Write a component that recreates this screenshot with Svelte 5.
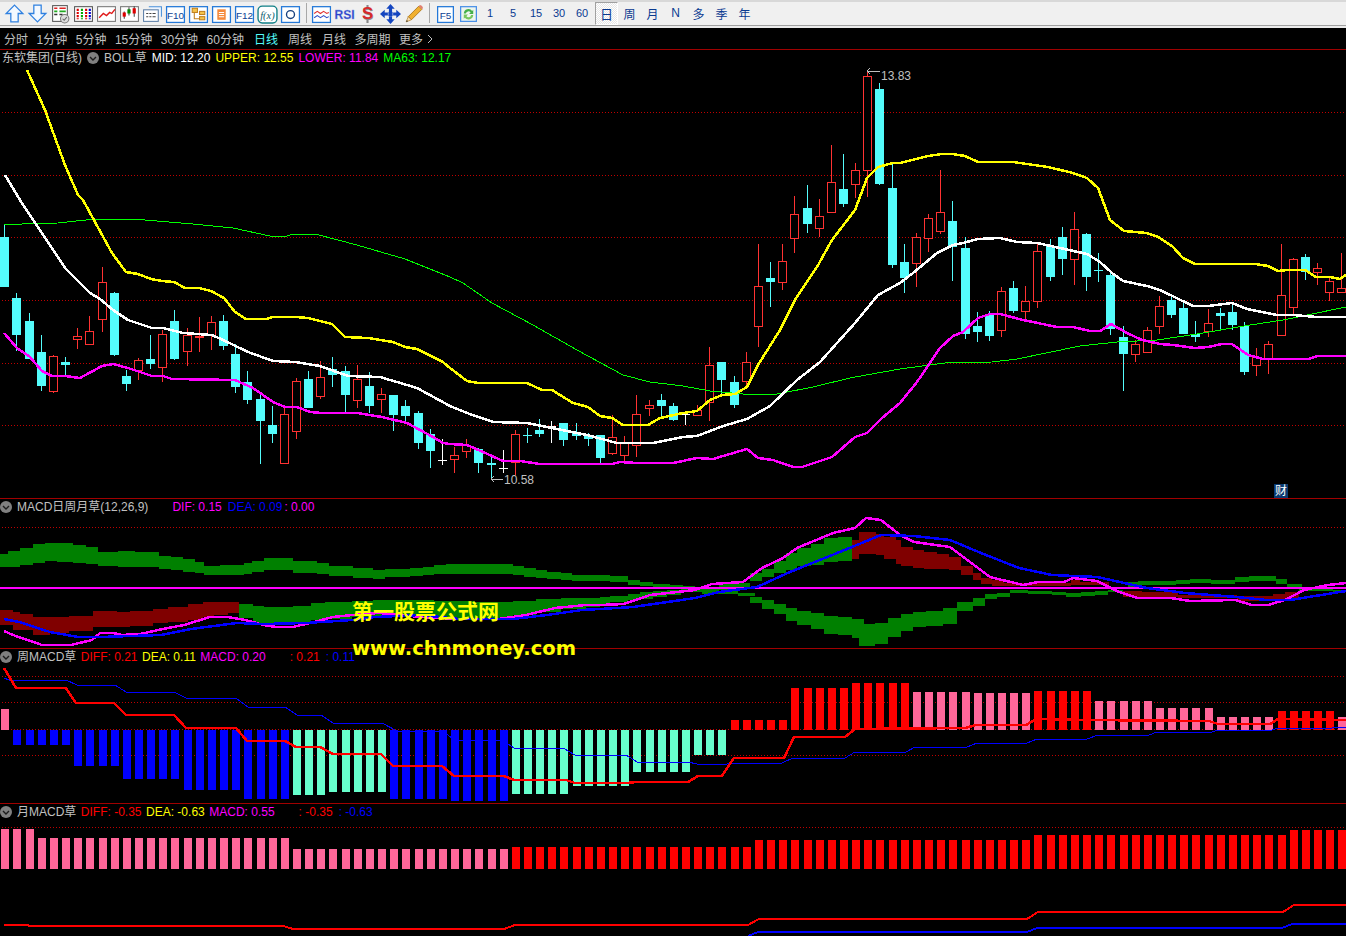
<script>
  const tabs = ['分时', '1分钟', '5分钟', '15分钟', '30分钟', '60分钟', '日线', '周线', '月线', '多周期', '更多'];
  const W = 1346;

  // [kind, high, bodyTop, bodyBottom, low]; one row per trading day
  const candles = [
    ['c',224,237,287,287],['c',293,298,335,351],['c',313,321,359,359],['c',335,352,386,391],['r',355,356,392,393],
    ['c',357,362,365,376],['r',328,336,340,349],['r',316,331,345,345],['r',267,282,320,332],['c',292,293,355,356],
    ['c',370,376,384,391],['r',358,360,371,380],['c',335,359,364,369],['r',330,334,368,382],['c',310,321,359,360],
    ['r',328,335,352,366],['r',317,336,338,352],['r',316,322,336,350],['c',315,321,346,350],['c',344,354,387,393],
    ['c',371,382,400,404],['c',395,399,421,464],['c',406,425,434,443],['r',407,414,464,464],['r',378,381,432,439],
    ['c',371,379,408,408],['r',361,377,397,399],['c',357,369,375,387],['c',366,371,395,412],['r',365,379,401,408],
    ['c',372,386,406,413],['r',388,394,400,413],['c',395,395,415,431],['c',400,406,416,422],['c',411,413,443,449],
    ['c',429,434,451,468],['w',439,460,460,465],['r',447,455,460,473],['r',439,445,452,458],['c',448,449,463,473],
    ['c',455,463,465,480],['w',450,468,468,473],['r',430,434,463,475],['c',428,435,435,443],['c',419,430,434,437],
    ['w',421,426,426,443],['c',423,423,440,446],['c',423,432,436,440],['c',433,436,439,446],['c',435,435,458,463],
    ['r',415,437,454,455],['r',436,443,456,462],['r',395,414,446,457],['r',400,405,409,416],['c',394,400,406,418],
    ['c',403,406,420,421],['w',411,414,414,425],['r',405,410,416,416],['r',347,365,403,421],['c',362,362,380,397],
    ['c',376,382,405,408],['r',352,362,382,387],['r',244,286,327,347],['c',262,278,282,307],['r',244,261,283,290],
    ['r',196,214,239,253],['c',185,208,224,233],['r',199,216,229,237],['r',145,182,213,213],['c',154,189,204,207],
    ['r',163,170,185,198],['r',70,76,171,197],['c',83,89,184,185],['c',164,188,265,268],['c',244,262,278,293],
    ['r',233,237,264,287],['r',214,218,239,252],['r',170,212,232,234],['c',201,221,247,281],['c',237,248,334,339],
    ['c',312,326,332,342],['c',311,315,336,341],['r',287,291,331,337],['c',281,288,311,313],['r',286,301,312,320],
    ['r',244,251,302,308],['c',239,246,277,281],['c',227,237,259,275],['r',212,229,260,285],['c',233,234,277,291],
    ['c',253,270,270,282],['c',273,275,329,335],['c',326,337,354,391],['r',340,344,355,362],['r',327,330,353,353],
    ['r',296,306,327,334],['c',297,300,315,318],['c',303,308,334,334],['c',321,334,337,342],['r',309,323,332,337],
    ['c',308,313,316,330],['c',305,312,325,330],['c',322,326,372,375],['r',348,357,366,376],['r',341,344,359,374],
    ['r',244,295,336,336],['r',258,259,308,315],['c',254,257,272,280],['r',263,268,273,285],['r',278,281,293,301],
    ['r',253,288,293,293]
  ];
  const colors = { c: '#54fcfc', r: '#ff3232', w: '#ffffff' };
  const cx = (i) => Math.round(4.3 + 12.155 * i);
  const pts = (a) => a.map((p) => p.join(',')).join(' ');

  const upper = [[27,70],[45,110],[65,165],[78,195],[83,200],[95,222],[112,253],[126,272],[138,274],[151,279],[162,281],[174,282],[185,288],[199,288],[211,291],[224,298],[235,312],[246,319],[266,319],[273,317],[296,317],[308,318],[332,324],[345,337],[368,338],[393,342],[405,347],[417,349],[433,357],[443,362],[450,368],[467,381],[478,383],[527,383],[542,390],[552,390],[573,403],[588,407],[600,416],[612,418],[623,425],[648,425],[660,418],[683,413],[697,411],[710,400],[722,395],[735,394],[747,387],[758,365],[780,330],[795,300],[817,267],[832,240],[855,210],[867,178],[878,167],[893,163],[900,163],[928,156],[942,154],[952,154],[965,156],[978,162],[1013,162],[1048,167],[1073,173],[1087,178],[1098,188],[1110,220],[1124,231],[1147,233],[1158,237],[1172,246],[1183,258],[1195,264],[1255,264],[1268,266],[1278,271],[1287,270],[1305,270],[1316,277],[1330,277],[1340,279],[1346,275]];
  const mid = [[5,175],[20,200],[35,223],[50,245],[65,268],[90,293],[100,299],[113,310],[128,320],[152,328],[163,328],[183,333],[212,335],[223,340],[248,352],[273,361],[295,362],[320,366],[348,376],[380,377],[417,388],[450,406],[467,413],[493,422],[527,423],[547,427],[587,435],[617,443],[653,443],[683,437],[697,436],[723,426],[747,419],[770,406],[797,380],[820,362],[855,323],[878,295],[900,283],[913,273],[937,253],[953,245],[963,243],[978,239],[1000,238],[1017,242],[1037,243],[1060,248],[1087,254],[1100,262],[1112,273],[1123,281],[1147,286],[1160,290],[1193,306],[1208,306],[1232,303],[1247,309],[1277,315],[1293,315],[1317,317],[1346,317]];
  const lower = [[4,333],[17,348],[30,357],[42,371],[52,376],[65,376],[80,378],[102,366],[113,364],[128,368],[152,376],[163,376],[172,379],[235,380],[253,388],[273,402],[285,407],[297,407],[310,412],[322,413],[357,413],[382,417],[407,423],[433,437],[443,443],[450,444],[467,445],[483,452],[503,461],[520,461],[540,464],[612,464],[620,462],[637,463],[673,463],[697,458],[713,459],[747,449],[758,458],[773,460],[793,467],[802,467],[832,457],[855,437],[867,433],[882,418],[900,403],[917,382],[940,348],[953,336],[963,332],[978,318],[990,314],[1000,314],[1023,320],[1057,327],[1073,327],[1090,331],[1100,331],[1111,324],[1127,333],[1142,340],[1160,344],[1173,345],[1195,348],[1208,347],[1222,344],[1232,344],[1248,355],[1263,359],[1308,359],[1318,356],[1346,356]];
  const ma63 = [[4,225],[22,224],[58,223],[95,219],[132,219],[157,221],[193,224],[233,228],[270,236],[287,236],[293,234],[315,234],[357,245],[405,259],[450,277],[463,283],[492,303],[533,325],[577,350],[623,375],[650,382],[683,386],[710,391],[743,394],[777,394],[813,387],[850,378],[883,372],[900,369],[945,363],[992,362],[1017,359],[1080,346],[1117,342],[1157,340],[1197,334],[1250,325],[1283,320],[1346,307]];
  const mainGrid = [112, 175, 237, 300, 363, 425];

  // MACD bands as measured: [x0, x1, top, bottom], [sx, ox] maps x and y = 495 + v / 3
  const bandRect = (r, sx, ox) => ({
    x: Math.round(ox + r[0] / sx),
    w: Math.max(1, Math.round(ox + r[1] / sx) - Math.round(ox + r[0] / sx)),
    y: Math.round(495 + r[2] / 3),
    h: Math.round((r[3] - r[2]) / 3)
  });
  const L = 2.613, R = 2.102;
  const green = [
    ...[[0,22,178,218],[22,52,168,215],[52,86,158,210],[86,118,147,205],[118,150,144,198],[150,192,144,200],[192,225,150,205],[225,255,156,208],[255,308,172,215],[308,352,168,215],[352,415,172,218],[415,448,183,222],[448,478,187,225],[478,510,193,232],[510,532,202,235],[532,575,212,240],[575,637,210,240],[637,658,203,235],[658,690,197,230],[690,765,189,225],[765,828,197,232],[828,860,205,238],[860,922,212,243],[922,975,218,248],[975,1005,224,250],[1005,1072,222,245],[1072,1105,220,244],[1105,1135,215,240],[1135,1165,210,238],[1165,1340,207,238],[1340,1370,212,240],[1370,1400,218,246],[1400,1430,225,250],[1430,1465,232,254],[1465,1495,235,257],[1495,1568,240,258],
      [625,660,327,370],[660,690,332,382],[690,765,335,385],[765,812,332,380],[812,850,325,375],[850,880,322,372],[880,920,320,370],[920,975,318,365],[975,1135,315,365],[1135,1240,318,370],[1240,1300,320,375],[1300,1340,320,370],[1340,1400,317,360],[1400,1465,312,350],[1465,1530,308,340],[1530,1568,308,335]].map((r) => bandRect(r, L, 0)),
    ...[[0,22,240,258],[22,58,243,262],[58,85,255,270],[85,112,262,274],[112,148,267,276],[148,175,270,278],[175,200,273,278],
      [0,22,305,325],[22,58,303,322],[58,85,297,315],[85,112,290,310],[112,140,287,305],[140,170,285,300],[170,215,282,290],[215,250,280,292],[250,290,268,285],[290,315,265,278],[315,340,235,258],[340,365,222,247],[365,392,198,235],[392,415,175,225],[415,443,160,215],[443,470,148,210],[470,500,130,203],[500,530,125,197],
      [215,290,288,296],[290,325,293,303],[315,340,306,323],[340,365,315,342],[365,392,327,357],[392,415,340,378],[415,443,348,390],[443,470,353,402],[470,500,362,415],[500,530,366,420],[530,555,372,430],[544,578,386,453],[578,605,383,447],[605,632,370,426],[632,658,357,408],[658,685,352,396],[685,722,347,392],[722,750,340,388],[750,785,322,350],[785,810,309,332],[810,835,298,312],[835,862,293,305],[862,900,286,296],[900,950,288,298],[950,980,290,300],[980,1012,293,306],[1012,1040,291,303],[1040,1068,289,302],[1068,1100,285,292],
      [1110,1130,262,278],[1130,1210,259,270],[1210,1240,255,268],[1240,1285,252,265],[1285,1335,255,268],[1335,1365,246,262],[1365,1420,243,258],[1420,1445,252,268],[1445,1475,267,278],[1470,1500,278,288],[1500,1540,283,290],[1540,1568,285,292]].map((r) => bandRect(r, R, 600))
  ];
  const maroon = [
    ...[[0,35,345,390],[35,52,350,405],[52,85,358,405],[85,130,365,418],[130,180,367,415],[180,242,362,408],[242,305,348,395],[305,340,350,395],[340,400,347,392],[400,440,342,385],[440,490,335,380],[490,530,328,375],[530,560,322,368],[560,595,320,360],[595,625,322,355]].map((r) => bandRect(r, L, 0)),
    ...[[530,545,135,192],[545,580,112,178],[580,597,118,180],[597,622,125,192],[622,632,135,208],[632,658,155,212],[658,682,165,218],[682,708,170,220],[708,733,177,222],[733,758,185,225],[758,785,212,240],[785,800,233,255],[800,825,250,268],[825,850,255,272],[850,990,265,275],[990,1010,255,270],[1010,1070,260,270],[1100,1140,287,305],[1140,1215,292,306],[1215,1340,300,310],[1340,1415,303,318],[1415,1440,296,315],[1440,1470,290,308]].map((r) => bandRect(r, R, 600))
  ];
  const toPts = (a, sx, ox) => a.map((p) => [Math.round(ox + p[0] / sx), Math.round(495 + p[1] / 3)]);
  const dif = [
    ...toPts([[10,408],[35,420],[110,450],[185,450],[240,435],[262,413],[295,413],[320,419],[365,416],[425,402],[480,390],[550,367],[595,367],[640,375],[690,390],[720,395],[765,395],[820,380],[870,365],[920,360],[990,355],[1100,365],[1200,373],[1300,373],[1375,360],[1450,340],[1530,330]], L, 0),
    ...toPts([[0,330],[50,327],[105,300],[200,285],[235,268],[300,260],[340,220],[385,190],[415,158],[490,115],[535,100],[560,70],[590,75],[630,120],[660,140],[735,157],[820,247],[890,270],[920,262],[975,262],[995,250],[1045,258],[1090,290],[1130,308],[1200,310],[1240,317],[1335,315],[1370,330],[1405,330],[1440,315],[1480,285],[1530,270],[1568,265]], R, 600)
  ];
  const dea = [
    ...toPts([[10,372],[50,382],[130,410],[205,425],[260,425],[420,420],[500,403],[620,383],[690,386],[800,385],[920,375],[980,365],[1100,360],[1200,372],[1340,372],[1430,360],[1520,345]], L, 0),
    ...toPts([[0,342],[70,337],[200,308],[250,292],[330,275],[400,230],[530,155],[590,120],[660,122],[735,135],[800,175],[880,220],[950,240],[1045,245],[1150,280],[1230,295],[1340,305],[1400,315],[1450,315],[1568,288]], R, 600)
  ];

  // Histogram runs: [first, last, color, y]
  const BL = '#0000ff', AQ = '#66ffcc', PK = '#ff6699', RD = '#ff0000';
  const weekRuns = [
    [0,0,PK,709],[1,5,BL,745],[6,9,BL,766],[10,14,BL,779],[15,19,BL,790],[20,23,BL,799],[24,26,AQ,795],[27,31,AQ,792],
    [32,36,BL,799],[37,41,BL,801],[42,46,AQ,794],[47,51,AQ,786],[52,56,AQ,772],[57,59,AQ,755],
    [60,64,RD,720],[65,69,RD,688],[70,74,RD,683],[75,79,PK,692],[80,84,PK,693],[85,89,RD,691],[90,94,PK,701],[95,99,PK,708],
    [100,104,PK,717],[105,109,RD,711],[110,110,PK,717]
  ];
  const monthRuns = [[0,2,PK,829],[3,23,PK,838],[24,41,PK,849],[42,61,RD,847],[62,84,RD,840],[85,105,RD,835],[106,110,RD,830]];
  const expand = (runs, base) => runs.flatMap(([a, b, color, y]) => {
    const out = [];
    for (let i = a; i <= b; i++) out.push({ x: cx(i) - 3, color, y: Math.min(y, base), h: Math.abs(y - base) });
    return out;
  });
  const weekBars = expand(weekRuns, 730);
  const monthBars = expand(monthRuns, 869);
  const weekRed = [[4,668],[16,688],[66,688],[76,703],[114,703],[126,715],[174,715],[186,728],[236,728],[247,741],[285,741],[296,747],[320,747],[333,754],[381,754],[393,766],[442,766],[454,776],[504,776],[514,780],[566,780],[575,783],[627,783],[636,782],[688,782],[698,776],[722,776],[734,758],[784,758],[794,737],[845,737],[855,729],[965,728],[976,725],[1026,725],[1036,719],[1085,720],[1209,721],[1218,724],[1270,724],[1278,719],[1346,720]];
  const weekBlue = [[4,678],[9,680],[66,680],[77,685],[115,685],[126,692],[174,692],[186,698],[236,698],[248,707],[285,707],[297,715],[321,715],[333,723],[382,723],[397,731],[442,731],[455,740],[502,740],[514,748],[563,748],[575,755],[626,755],[637,762],[688,762],[697,764],[727,764],[731,763],[782,763],[793,758],[845,758],[855,752],[906,752],[915,747],[967,747],[977,743],[1027,743],[1037,739],[1087,739],[1098,735],[1149,735],[1157,732],[1212,732],[1218,730],[1272,730],[1278,728],[1332,728],[1337,727],[1346,727]];
  const monthRed = [[4,925],[28,925],[29,926],[283,926],[293,929],[504,929],[515,925],[748,925],[759,919],[1027,919],[1038,912],[1283,912],[1294,905],[1346,905]];
  const monthBlue = [[748,936],[758,932],[1027,932],[1037,928],[1282,928],[1292,924],[1346,924]];
</script>

<div class="app">
  <div class="toolbar">
    <span class="btn"><svg viewBox="0 0 20 20"><path d="M10 2 18 10H13.5V18H6.5V10H2Z" fill="#f4f9ff" stroke="#2f80e0" stroke-width="1.2"/></svg></span>
    <span class="btn"><svg viewBox="0 0 20 20"><path d="M10 18 18 10H13.5V2H6.5V10H2Z" fill="#f4f9ff" stroke="#2f80e0" stroke-width="1.2"/></svg></span>
    <span class="btn"><svg viewBox="0 0 20 20"><rect x="2.5" y="2.5" width="14" height="15" fill="#fff" stroke="#555"/><path d="M4 5h3M9 5h6" stroke="#d22" stroke-width="1.5"/><path d="M4 8h3M9 8h6" stroke="#2a2" stroke-width="1.5"/><path d="M4 11h3M9 11h3" stroke="#333" stroke-width="1.5"/><circle cx="14" cy="15" r="4" fill="#ddd" stroke="#777"/><path d="M12 15l1.5 1.5 2.5-3" fill="none" stroke="#666"/></svg></span>
    <span class="btn"><svg viewBox="0 0 20 20"><rect x="1.5" y="3.5" width="17" height="14" fill="#fff" stroke="#555"/><path d="M4.5 5.5v10" stroke="#d00" stroke-width="2" stroke-dasharray="2 1"/><path d="M8.5 5.5v10" stroke="#0a0" stroke-width="2" stroke-dasharray="2 1"/><path d="M12.5 5.5v10" stroke="#d00" stroke-width="2" stroke-dasharray="2 1"/><path d="M16 5.5v10" stroke="#00c" stroke-width="2" stroke-dasharray="2 1"/></svg></span>
    <span class="btn"><svg viewBox="0 0 20 20"><rect x="1.5" y="3.5" width="17" height="14" fill="#fff" stroke="#777"/><path d="M3 14l4-4 3 2 3-3 2 1 3-4" fill="none" stroke="#e01818" stroke-width="1.3"/></svg></span>
    <span class="btn"><svg viewBox="0 0 20 20"><rect x="1.5" y="3.5" width="17" height="14" fill="#fff" stroke="#777"/><path d="M5 8v7M9.5 4v8M14.5 3v10" stroke="#444"/><rect x="3.5" y="9" width="3" height="4" fill="#d00"/><rect x="8" y="6" width="3" height="4" fill="#080"/><rect x="13" y="5" width="3" height="5" fill="#d00"/></svg></span>
    <span class="btn"><svg viewBox="0 0 20 20"><path d="M6.5 3.5H18.5V13" fill="#eef5ff" stroke="#4a90d9"/><rect x="1.5" y="6.5" width="14" height="11" fill="#fff" stroke="#5c7fa8"/><path d="M4 10h2M7 10h2M10 10h3M4 13h2M7 13h2M10 13h3" stroke="#444"/></svg></span>
    <span class="btn"><svg viewBox="0 0 20 20"><rect x="1.5" y="3.5" width="17" height="15" fill="#fff" stroke="#2378d8" stroke-width="1.2"/><text x="10" y="15" class="ic">F10</text></svg></span>
    <span class="btn"><svg viewBox="0 0 20 20"><rect x="1.5" y="3.5" width="17" height="15" fill="#fff" stroke="#2378d8" stroke-width="1.2"/><path d="M6 8v7h5" fill="none" stroke="#c08020"/><rect x="4" y="5" width="5" height="4" fill="#f6c34a" stroke="#c08020"/><rect x="11" y="8" width="5" height="3" fill="#f6c34a" stroke="#c08020"/><rect x="11" y="13" width="5" height="3" fill="#f6c34a" stroke="#c08020"/></svg></span>
    <span class="btn"><svg viewBox="0 0 20 20"><rect x="1.5" y="3.5" width="17" height="15" fill="#fff" stroke="#2378d8" stroke-width="1.2"/><rect x="6" y="6" width="8" height="10" fill="#f58a3c"/><path d="M7.5 9h5M7.5 11h5M7.5 13h5" stroke="#fff"/></svg></span>
    <span class="btn"><svg viewBox="0 0 20 20"><rect x="1.5" y="3.5" width="17" height="15" fill="#fff" stroke="#2378d8" stroke-width="1.2"/><text x="10" y="15" class="ic">F12</text></svg></span>
    <span class="btn"><svg viewBox="0 0 20 20"><rect x="1" y="3" width="18" height="16" rx="4" fill="#fff" stroke="#0f7f86" stroke-width="1.3"/><text x="10" y="15" class="ic it">f(x)</text></svg></span>
    <span class="btn"><svg viewBox="0 0 20 20"><rect x="1.5" y="3.5" width="17" height="15" fill="#fff" stroke="#2378d8" stroke-width="1.2"/><circle cx="10" cy="11" r="3.8" fill="none" stroke="#17407e" stroke-width="1.3"/></svg></span>
    <span class="sep"></span>
    <span class="btn"><svg viewBox="0 0 20 20"><rect x="1.5" y="3.5" width="17" height="15" fill="#fff" stroke="#2378d8" stroke-width="1.2"/><path d="M3 10l3-2 3 2 3-2 3 2 2-1" fill="none" stroke="#e03030"/><path d="M3 14l3-2 3 2 3-2 3 2 2-1" fill="none" stroke="#3050c8"/></svg></span>
    <span class="btn"><svg viewBox="0 0 20 20"><text x="10" y="15" class="rsi">RSI</text></svg></span>
    <span class="btn"><svg viewBox="0 0 20 20"><path d="M10 2v3M10 16v3" stroke="#888" stroke-width="2"/><text x="10.5" y="16" class="dollar shade">S</text><text x="10" y="15.5" class="dollar">S</text></svg></span>
    <span class="btn"><svg viewBox="0 0 20 20"><path d="M10 1 14 5.5H11.5V8.500H8.500V5.500H6ZM10 20 14 15.500H11.500V12.500H8.500V15.500H6ZM0 10.500 4.500 6.500V9H7.500V12H4.500V14.500ZM20 10.500 15.500 6.500V9H12.500V12H15.500V14.500Z" fill="#1546c0"/><rect x="8" y="8.500" width="4" height="4" fill="#1546c0"/></svg></span>
    <span class="btn"><svg viewBox="0 0 20 20"><path d="M5 13 15 3l3 3L8 16Z" fill="#f0b030" stroke="#a87010" stroke-width=".8"/><path d="M15 3l3 3 1-1c0-1.500-1.500-3-3-3Z" fill="#e08070"/><path d="M5 13 3 18l5-2Z" fill="#f6dcb0" stroke="#a87010" stroke-width=".6"/><path d="M3 18l1.800-.700-1.100-1.100Z" fill="#333"/></svg></span>
    <span class="sep"></span>
    <span class="btn"><svg viewBox="0 0 20 20"><rect x="2.5" y="3.500" width="15" height="15" fill="#fff" stroke="#2378d8" stroke-width="1.200"/><text x="10" y="15" class="ic">F5</text></svg></span>
    <span class="btn"><svg viewBox="0 0 20 20"><rect x="2.500" y="3.500" width="15" height="14" fill="#eef5ee" stroke="#4a90e8" stroke-width="1.200"/><path d="M5.500 10a4.500 4.500 0 0 1 8-2.500l1-1v4h-4l1.500-1.500a2.500 2.500 0 0 0-4.500 1Z" fill="#46b04a"/><path d="M14.500 11.500a4.500 4.500 0 0 1-8 2.500l-1 1v-4h4l-1.500 1.500a2.500 2.500 0 0 0 4.500-1Z" fill="#78c860"/></svg></span>
    {#each ['1', '5', '15', '30', '60'] as n}
      <span class="btn num" class:lead={n === '1'}>{n}</span>
    {/each}
    <span class="btn per active">日</span>
    {#each ['周', '月', 'N', '多', '季', '年'] as n}
      <span class="btn per">{n}</span>
    {/each}
  </div>

  <nav class="tabs">
    {#each tabs as t}
      <span class="tab" class:cur={t === '日线'}>{t}</span>
    {/each}
    <svg class="more" viewBox="0 0 6 10" width="6" height="10"><path d="M1 1l4 4-4 4" fill="none" stroke="#c0c0c0"/></svg>
  </nav>

  <section class="panel main">
    <svg class="chart" viewBox="0 50 1346 448" width={W} height="448">
      {#each mainGrid as y}
        <line class="grid" x1="2" x2={W} y1={y + 0.5} y2={y + 0.5} />
      {/each}
      {#each candles as [k, hi, top, bot, lo], i}
        <rect class="px" x={cx(i)} y={hi} width="1" height={lo - hi} fill={colors[k]} />
        {#if k === 'r'}
          <rect class="px" x={cx(i) - 4 + 0.5} y={top + 0.5} width="8" height={Math.max(bot - top - 1, 1)} fill="#000" stroke={colors[k]} />
        {:else}
          <rect class="px" x={cx(i) - 4} y={top} width="9" height={Math.max(bot - top, 1)} fill={colors[k]} />
        {/if}
      {/each}
      <polyline class="ln" points={pts(ma63)} stroke="#00ff00" stroke-width="1" />
      <polyline class="ln" points={pts(upper)} stroke="#ffff00" stroke-width="2.5" />
      <polyline class="ln" points={pts(mid)} stroke="#ffffff" stroke-width="2.5" />
      <polyline class="ln" points={pts(lower)} stroke="#ff00ff" stroke-width="2.5" />
      <path class="note-line" d="M867 71h13M867 71l3-3M867 71l3 3" />
      <text class="note" x="881" y="80">13.83</text>
      <path class="note-line" d="M491 479h12M491 479l3-3M491 479l3 3" />
      <text class="note" x="504" y="484">10.58</text>
    </svg>
    <div class="legend">
      <span class="gray">东软集团(日线)</span>
      <svg class="chev" viewBox="0 0 12 12" width="12" height="12"><circle cx="6" cy="6" r="6" fill="#808080"/><path d="M3 5l3 3 3-3" fill="none" stroke="#1c1c1c" stroke-width="1.400"/></svg>
      <span class="gray">BOLL草</span>
      <span class="white">MID: 12.20</span>
      <span class="yellow">UPPER: 12.55</span>
      <span class="magenta">LOWER: 11.84</span>
      <span class="lime">MA63: 12.17</span>
    </div>
    <span class="cai">财</span>
  </section>

  <section class="panel macd">
    <svg class="chart" viewBox="0 499 1346 149" width={W} height="149">
      <line class="grid" x1="2" x2={W} y1="527.5" y2="527.5" />
      {#each green as b}
        <rect class="px" x={b.x} y={b.y} width={b.w} height={b.h} fill="#008000" />
      {/each}
      {#each maroon as b}
        <rect class="px" x={b.x} y={b.y} width={b.w} height={b.h} fill="#800000" />
      {/each}
      <line x1="0" x2={W} y1="588" y2="588" stroke="#ff00ff" stroke-width="2" class="px" />
      <polyline class="ln" points={pts(dif)} stroke="#ff00ff" stroke-width="2.5" />
      <polyline class="ln" points={pts(dea)} stroke="#0000ff" stroke-width="2.5" />
    </svg>
    <div class="legend flush">
      <svg class="chev" viewBox="0 0 12 12" width="12" height="12"><circle cx="6" cy="6" r="6" fill="#808080"/><path d="M3 5l3 3 3-3" fill="none" stroke="#1c1c1c" stroke-width="1.400"/></svg>
      <span class="gray">MACD日周月草(12,26,9)</span>
      <span class="magenta far">DIF: 0.15</span>
      <span class="blue near">DEA: 0.09</span>
      <span class="magenta tight">: 0.00</span>
    </div>
  </section>

  <section class="panel week">
    <svg class="chart" viewBox="0 649 1346 154" width={W} height="154">
      {#each [676, 702, 729, 755] as y}
        <line class="grid" x1="2" x2={W} y1={y + 0.5} y2={y + 0.5} />
      {/each}
      {#each weekBars as b}
        <rect class="px" x={b.x} y={b.y} width="8" height={b.h} fill={b.color} />
      {/each}
      <polyline class="ln" points={pts(weekBlue)} stroke="#0000ff" stroke-width="1" />
      <polyline class="ln" points={pts(weekRed)} stroke="#ff0000" stroke-width="2.5" />
    </svg>
    <div class="legend flush">
      <svg class="chev" viewBox="0 0 12 12" width="12" height="12"><circle cx="6" cy="6" r="6" fill="#808080"/><path d="M3 5l3 3 3-3" fill="none" stroke="#1c1c1c" stroke-width="1.400"/></svg>
      <span class="gray">周MACD草</span>
      <span class="red">DIFF: 0.21</span>
      <span class="yellow">DEA: 0.11</span>
      <span class="magenta">MACD: 0.20</span>
      <span class="red far">: 0.21</span>
      <span class="blue near">: 0.11</span>
    </div>
  </section>

  <section class="panel month">
    <svg class="chart" viewBox="0 804 1346 132" width={W} height="132">
      <line class="grid" x1="2" x2={W} y1="827.5" y2="827.5" />
      {#each monthBars as b}
        <rect class="px" x={b.x} y={b.y} width="8" height={b.h} fill={b.color} />
      {/each}
      <polyline class="ln" points={pts(monthBlue)} stroke="#0000ff" stroke-width="2" />
      <polyline class="ln" points={pts(monthRed)} stroke="#ff0000" stroke-width="2" />
    </svg>
    <div class="legend flush">
      <svg class="chev" viewBox="0 0 12 12" width="12" height="12"><circle cx="6" cy="6" r="6" fill="#808080"/><path d="M3 5l3 3 3-3" fill="none" stroke="#1c1c1c" stroke-width="1.400"/></svg>
      <span class="gray">月MACD草</span>
      <span class="red">DIFF: -0.35</span>
      <span class="yellow">DEA: -0.63</span>
      <span class="magenta">MACD: 0.55</span>
      <span class="red far">: -0.35</span>
      <span class="blue near">: -0.63</span>
    </div>
  </section>

  <div class="watermark">
    <div class="wm-cn">第一股票公式网</div>
    <div class="wm-en">www.chnmoney.com</div>
  </div>
</div>

<style>
  :global(body) {
    margin: 0;
    background: #000;
    overflow: hidden;
  }
  .app {
    position: relative;
    width: 1346px;
    height: 936px;
    overflow: hidden;
    background: #000;
    font: 12px "Liberation Sans", "Noto Sans CJK SC", sans-serif;
  }
  .toolbar {
    box-sizing: border-box;
    height: 28px;
    display: flex;
    align-items: center;
    padding: 0 0 4px 2.5px;
    background: #f0f0f0;
    border-top: 2px solid #d8d8d8;
    box-shadow: inset 0 -2px 0 0 #ececec, inset 0 -3px 0 0 #a0a0a0;
  }
  .btn {
    flex: none;
    box-sizing: border-box;
    width: 23px;
    height: 23px;
    display: flex;
    align-items: center;
    justify-content: center;
  }
  .btn svg {
    width: 21px;
    height: 21px;
  }
  .sep {
    flex: none;
    width: 1px;
    height: 20px;
    margin: 0 3.5px 0 4px;
    background: #a8a8a8;
  }
  .num {
    color: #0a3a90;
    font-size: 11px;
  }
  .lead {
    margin-left: -1px;
  }
  .per {
    color: #0a3a90;
    font-size: 12px;
  }
  .active {
    margin-left: 1.5px;
    font-size: 13px;
    border: 1px solid;
    border-color: #a0a0a0 #fff #fff #a0a0a0;
    background: repeating-conic-gradient(#fff 0 25%, #e6e6e6 0 50%) 0 0 / 2px 2px;
  }
  .ic {
    font: 9.5px "Liberation Sans", sans-serif;
    fill: #0c3f94;
    text-anchor: middle;
  }
  .it {
    font: italic 10px "Liberation Serif", serif;
    fill: #0f5f70;
  }
  .rsi {
    font: bold 11.5px "Liberation Sans", sans-serif;
    fill: #2a40c8;
    stroke: #8aa0e8;
    stroke-width: 0.3;
    text-anchor: middle;
  }
  .dollar {
    font: bold 16px "Liberation Sans", sans-serif;
    fill: #d82a2a;
    text-anchor: middle;
  }
  .shade {
    fill: #8a8a8a;
  }
  .tabs {
    box-sizing: border-box;
    height: 21px;
    display: flex;
    align-items: center;
    gap: 8.5px;
    padding-left: 4px;
    color: #c0c0c0;
  }
  .tab:nth-child(7),
  .tab:nth-child(8),
  .tab:nth-child(9) {
    margin-left: 1.5px;
  }
  .cur {
    color: #54fcfc;
  }
  .more {
    margin-left: -5px;
  }
  .panel {
    position: relative;
    border-top: 1px solid #a00000;
  }
  .chart {
    display: block;
  }
  .grid {
    stroke: #c00000;
    stroke-dasharray: 1 2;
  }
  .px {
    shape-rendering: crispEdges;
  }
  .ln {
    fill: none;
    shape-rendering: crispEdges;
  }
  .note {
    font: 12px "Liberation Sans", sans-serif;
    fill: #c0c0c0;
  }
  .note-line {
    fill: none;
    stroke: #c0c0c0;
    shape-rendering: crispEdges;
  }
  .legend {
    position: absolute;
    left: 2px;
    top: 0;
    height: 16px;
    line-height: 16px;
    display: flex;
    align-items: baseline;
    gap: 5px;
    white-space: nowrap;
  }
  .legend.flush {
    left: 0;
    gap: 4.5px;
  }
  .legend .chev {
    flex: none;
    align-self: center;
  }
  .legend.flush .chev {
    margin-right: 0.5px;
  }
  .gray {
    color: #c0c0c0;
  }
  .white {
    color: #fff;
  }
  .yellow {
    color: #ff0;
  }
  .magenta {
    color: #f0f;
  }
  .lime {
    color: #0f0;
  }
  .red {
    color: #f00;
  }
  .blue {
    color: #00f;
  }
  .far {
    margin-left: 19.5px;
  }
  .near {
    margin-left: 1.5px;
  }
  .tight {
    margin-left: -2.5px;
  }
  .cai {
    position: absolute;
    left: 1274px;
    bottom: 0;
    width: 14px;
    height: 14px;
    line-height: 14px;
    text-align: center;
    background: #0a3a70;
    color: #fff;
  }
  .watermark {
    position: absolute;
    left: 352px;
    top: 599px;
    color: #ff0;
    font-weight: bold;
    white-space: nowrap;
    pointer-events: none;
  }
  .wm-cn {
    font-size: 21px;
    line-height: 25px;
  }
  .wm-en {
    margin-top: 13px;
    font: bold 19.5px "DejaVu Sans", sans-serif;
    line-height: 24px;
  }
</style>
